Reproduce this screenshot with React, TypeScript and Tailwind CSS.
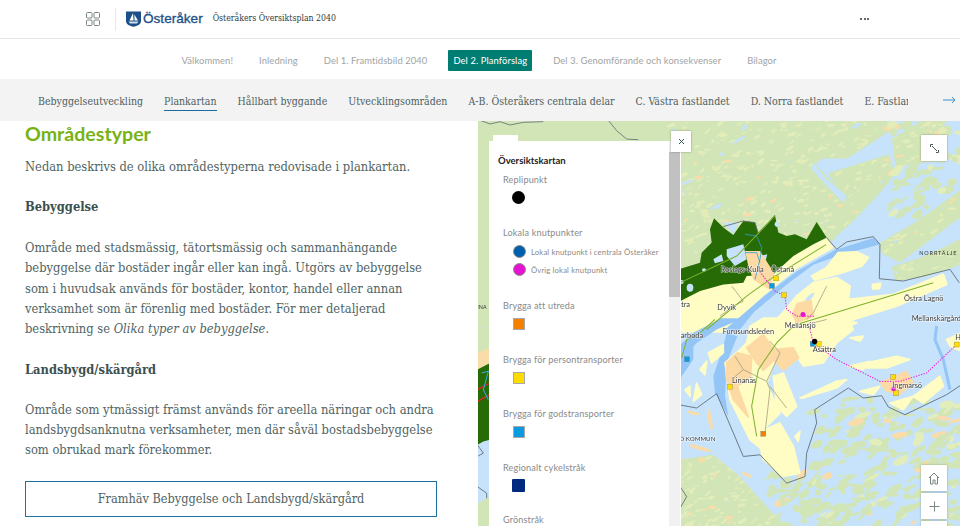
const serif = "font-['DejaVu_Serif_Condensed','DejaVu_Serif',serif] font-stretch-condensed";
const sans = "font-['Lato','Noto_Sans',sans-serif]";

const topNav = ["Välkommen!", "Inledning", "Del 1. Framtidsbild 2040", "Del 2. Planförslag", "Del 3. Genomförande och konsekvenser", "Bilagor"];
const subNav = ["Bebyggelseutveckling", "Plankartan", "Hållbart byggande", "Utvecklingsområden", "A-B. Österåkers centrala delar", "C. Västra fastlandet", "D. Norra fastlandet", "E. Fastlandet söder"];

function rng(seed: number) {
  let a = seed;
  return () => {
    a = (a + 0x6d2b79f5) | 0;
    let t = Math.imul(a ^ (a >>> 15), 1 | a);
    t = (t + Math.imul(t ^ (t >>> 7), 61 | t)) ^ t;
    return ((t ^ (t >>> 14)) >>> 0) / 4294967296;
  };
}

function speckles(seed: number, n: number, x0: number, x1: number, y0: number, y1: number) {
  const r = rng(seed);
  return Array.from({ length: n }, (_, i) => {
    const x = x0 + r() * (x1 - x0);
    const y = y0 + r() * (y1 - y0);
    const k = r();
    const rx = 3 + r() * 11;
    const ry = 1.5 + r() * 4;
    const rot = -45 + r() * 50;
    const fill = k < 0.86 ? "#e3edba" : k < 0.94 ? "#f9dcaa" : "#c4e2fa";
    return <ellipse key={i} cx={x} cy={y} rx={k > 0.94 ? rx * 0.5 : rx} ry={k > 0.94 ? ry * 0.7 : ry} fill={fill} transform={`rotate(${rot} ${x} ${y})`} />;
  });
}

function islands(seed: number, n: number, x0: number, x1: number, y0: number, y1: number) {
  const r = rng(seed);
  return Array.from({ length: n }, (_, i) => {
    const x = x0 + r() * (x1 - x0);
    const y = y0 + r() * (y1 - y0);
    const big = r();
    const rx = 7 + big * 20;
    const ry = 3 + r() * 9;
    const rot = -50 + r() * 60;
    const k = r();
    return <ellipse key={i} cx={x} cy={y} rx={rx} ry={ry} fill={k < 0.8 ? "#d2e5b6" : k < 0.87 ? "#f9dcaa" : "#e3edba"} transform={`rotate(${rot} ${x} ${y})`} />;
  });
}

function Label({ x, y, t, size = 7.4 }: { x: number; y: number; t: string; size?: number }) {
  return (
    <text x={x} y={y} fontSize={size * 3} fontFamily="Lato, sans-serif" fill="#3a3a3a" stroke="#fff" strokeWidth="3" paintOrder="stroke" strokeOpacity="0.75">{t}</text>
  );
}

function Sq({ x, y, c, s = 15 }: { x: number; y: number; c: string; s?: number }) {
  return <rect x={x - s / 2} y={y - s / 2} width={s} height={s} fill={c} stroke="#777" strokeWidth="1" />;
}

const landA = [
  "M-606 -6H610L630 30L570 70L500 114L425 114L400 135L444 180L495 231L498 285L459 360L-606 840Z",
  "M450 165L560 130L625 110L640 165L600 215L520 300L470 345L505 240Z",
  "M640 60L700 25L770 -5L810 40L740 125L650 140Z",
  "M600 375L720 305L845 215V285L740 365L660 425L610 400Z",
  "M640 445L720 420L800 385L845 360V430L730 470L650 480Z",
];
const landB = [
  "M-4 420L100 405L180 470L260 560L320 625H-4Z",
];

function MapArt() {
  return (
    <svg className="block h-full w-full blur-[0.4px]" viewBox="478 122 482 404" preserveAspectRatio="none">
      <rect x="478" y="122" width="482" height="404" fill="#c6e3fb" />
      <g transform="translate(680 120) scale(0.3333)">
        <clipPath id="landA"><path d={landA.join("")} /></clipPath>
        <g fill="#d2e5b6" stroke="#d2e5b6" strokeWidth="8" strokeLinejoin="round">{landA.map((d) => <path key={d} d={d} />)}</g>
        <g>{islands(11, 85, 620, 850, 0, 300)}</g>
        <g clipPath="url(#landA)">{speckles(7, 640, -30, 845, 0, 520)}</g>
        <g fill="#c6e3fb">
          <ellipse cx="192" cy="26" rx="12" ry="5" transform="rotate(-50 192 26)" /><ellipse cx="178" cy="62" rx="24" ry="4" transform="rotate(-30 178 62)" /><ellipse cx="125" cy="105" rx="8" ry="5" />
          <path d="M400 130L440 180L500 230L490 250L440 200L395 150Z" />
          <ellipse cx="110" cy="262" rx="20" ry="5" transform="rotate(-25 110 262)" />
          <ellipse cx="20" cy="190" rx="22" ry="4" transform="rotate(-20 20 190)" />
          <ellipse cx="530" cy="20" rx="16" ry="5" transform="rotate(-30 530 20)" />
        </g>
        <path d="M-4 545L60 515L130 495L190 490L200 470L280 465L340 410L400 375L440 358L462 385L350 450L250 530L130 640H-4Z" fill="#fffcc4" />
        <path d="M135 630L255 528L352 455L465 392L580 356L600 375L480 408L400 436L320 495L222 578L172 640Z" fill="#93c5f6" />
        <path d="M-4 450L60 430L65 400L95 370L90 330L102 297L130 325L160 347L190 305L225 310L235 340L285 288L295 340L320 350L345 345L380 360L410 308L440 355L400 375L340 410L280 465L200 470L190 490L130 495L60 515L-4 548Z" fill="#276b07" />
        <g fill="#c6e3fb">
          <path d="M140 390L190 375L200 420L165 440L140 410Z" /><path d="M100 420L125 405L130 425L105 432Z" /><ellipse cx="72" cy="452" rx="6" ry="5" /><ellipse cx="30" cy="505" rx="10" ry="12" /><path d="M240 410L262 405L255 430Z" /><path d="M130 310L175 310L160 345Z" />
          <ellipse cx="290" cy="315" rx="6" ry="8" /><ellipse cx="5" cy="488" rx="6" ry="6" />
        </g>
        <g fill="#fffcc4" stroke="#fffcc4" strokeWidth="6" strokeLinejoin="round">
          <path d="M240 640L300 590L350 530L400 490L470 475L510 500L505 540L640 525L790 465L800 495L650 560L520 600L430 625L390 640Z" />
          <path d="M395 470L440 445L475 400L530 398L565 415L545 440L480 462L405 482Z" />
          <path d="M578 495L602 492L598 508L578 508Z" />
          <path d="M500 605L530 610L510 618Z" />
        </g>
        <ellipse cx="388" cy="535" rx="20" ry="6" transform="rotate(-45 388 535)" fill="#c6e3fb" />
      </g>
      <g transform="translate(680 320) scale(0.3333)">
        <clipPath id="landB"><path d={landB.join("")} /></clipPath>
        <g fill="#d2e5b6">{landB.map((d) => <path key={d} d={d} />)}</g>
        <g>{islands(31, 250, 400, 850, 235, 630)}</g>
        <g>{islands(47, 60, 260, 420, 460, 630)}</g>
        <g clipPath="url(#landB)">{speckles(23, 150, -10, 330, 400, 620)}</g>
        <g fill="#f9dcaa">
          <ellipse cx="60" cy="385" rx="36" ry="6" transform="rotate(15 60 385)" /><ellipse cx="40" cy="280" rx="20" ry="5" transform="rotate(15 40 280)" /><ellipse cx="90" cy="300" rx="6" ry="32" transform="rotate(-10 90 300)" /><ellipse cx="65" cy="420" rx="10" ry="8" /><ellipse cx="200" cy="465" rx="16" ry="5" transform="rotate(25 200 465)" />
        </g>
        <path d="M-4 130L50 70L110 30L190 -4H125L40 40L-4 80Z" fill="#93c5f6" />
        <path d="M-4 90L40 70L40 120L5 170L-4 230Z" fill="#93c5f6" />
        <path d="M140 40L172 50L140 130L135 230L145 290L105 220L100 170L130 80Z" fill="#93c5f6" />
        <path d="M770 20L765 60L790 120L810 210" fill="none" stroke="#93c5f6" strokeWidth="9" />
        <g fill="#fffcc4" stroke="#fffcc4" strokeWidth="5" strokeLinejoin="round">
          <path d="M200 70L210 20L250 -4H500L520 30L470 70L430 130L370 140L345 100L290 110L260 190L300 280L260 320L230 340L260 400L210 360L150 240L135 130L180 90Z" />
          <path d="M280 170L310 160L350 260L320 290L290 260Z" />
          <path d="M230 340L300 310L340 380L360 460L310 470L250 420Z" />
          <path d="M85 100L130 75L130 100L95 130Z" /><path d="M50 190L65 225L40 245Z" /><path d="M15 210L30 200L30 230Z" />
          <path d="M360 235L470 185L500 180L470 205L370 235Z" /><path d="M560 130L650 110L690 120L620 145L560 145Z" />
          <path d="M510 55L550 50L540 65Z" /><path d="M800 60L845 40V95L810 80Z" /><path d="M505 140L570 125L550 150Z" />
          <path d="M700 230L780 170L790 200L730 250Z" /><path d="M630 250L700 230L670 270Z" /><path d="M540 215L600 200L580 225Z" />
          <path d="M345 350L360 335L355 365Z" /><path d="M290 350L300 340L305 370Z" /><path d="M60 150L80 125L75 165Z" />
        </g>
        <path d="M140 130L172 100L215 110L212 170L172 200L205 292L160 240L138 170Z" fill="#fdd9a3" stroke="#fdd9a3" strokeWidth="5" strokeLinejoin="round" />
        <path d="M200 85L250 45L282 90L340 85L356 115L310 152L282 122L250 152L230 130Z" fill="#fdd9a3" stroke="#fdd9a3" strokeWidth="5" strokeLinejoin="round" />
        <path d="M598 188L680 153L702 188L660 226L618 216Z" fill="#fdd9a3" />
        <g fill="none" stroke="#9a9878" strokeWidth="2.2">
          <path d="M165 110L190 150L160 175" /><path d="M190 150L260 185L270 210L255 340" /><path d="M260 185L300 100L270 65" /><path d="M270 200L320 265" /><path d="M380 15L440 0" />
        </g>
        <g fill="none" stroke="#5f6b74" strokeWidth="2.6">
          <path d="M-4 255L50 265L110 222L190 410L240 405L320 490L375 470L380 400L410 310L404 270L505 205L550 235L605 228L625 262L675 285L800 225L845 195" />
          <path d="M0 500L20 530L0 565" />
        </g>
        <path d="M230 350L215 260L235 150L290 70L340 20" fill="none" stroke="#7cb22d" strokeWidth="3" />
        <path d="M5 115L20 60L60 40L105 0" fill="none" stroke="#7cb22d" strokeWidth="3" />
        <path d="M390 30L400 70L470 120L600 185L660 185L740 160L830 75" fill="none" stroke="#ee1fd8" strokeWidth="3.5" strokeDasharray="1 7" strokeLinecap="round" />
        <Sq x={21} y={119} c="#0a9be0" />
        <Sq x={150} y={201} c="#ffdc00" />
        <Sq x={250} y={342} c="#f57f00" />
        <Sq x={398} y={73} c="#0a9be0" />
        <Sq x={416} y={73} c="#ffdc00" />
        <circle cx="404" cy="66" r="8" fill="#000" />
        <Sq x={640} y={172} c="#ffdc00" />
        <circle cx="641" cy="208" r="7" fill="#e614d2" />
        <Sq x={648} y={221} c="#ffdc00" />
        <Sq x={830} y={75} c="#ffdc00" />
        <Label x={128} y={42} t="Furusundsleden" />
        <Label x={2} y={54} t="arboda" />
        <Label x={156} y={190} t="Linanäs" />
        <Label x={398} y={97} t="Asättra" />
        <Label x={637} y={205} t="Ingmarsö" />
        <Label x={-2} y={365} t="Ö KOMMUN" size={6.2} />
        <Label x={314} y={25} t="Mellansjö" />
        <Label x={826} y={62} t="Hu" />
      </g>
      <g transform="translate(680 120) scale(0.3333)">
        <g fill="none" stroke="#5f6b74" strokeWidth="2.6">
          <path d="M130 322L190 305L225 310L235 345L285 288" />
          <path d="M440 355L470 390L500 368L580 352L600 375L598 478L670 485L810 450L838 490" />
        </g>
        <path d="M195 395L240 395L282 460L270 512L220 482L205 440Z" fill="#fdd9a3" />
        <path d="M335 585L350 550L395 540L402 592L350 612Z" fill="#fdd9a3" />
        <g fill="none" stroke="#9a9878" strokeWidth="2.2">
          <path d="M155 500L190 545L160 560L120 590" /><path d="M440 500L400 580L380 600" />
        </g>
        <path d="M195 345L230 350L245 385L240 420L225 480M195 400L230 400L240 430" fill="none" stroke="#2c9cd6" strokeWidth="2.4" />
        <g fill="none" stroke="#7cb22d" strokeWidth="3">
          <path d="M-4 492L170 410L285 290" /><path d="M80 630L200 530L270 480L438 376" /><path d="M360 612L760 490" />
        </g>
        <path d="M240 458L285 515L315 530L320 570L350 590L400 590" fill="none" stroke="#ee1fd8" strokeWidth="3.5" strokeDasharray="1 7" strokeLinecap="round" />
        <Sq x={289} y={477} c="#ffdc00" />
        <Sq x={276} y={499} c="#0a9be0" />
        <Sq x={313} y={527} c="#ffdc00" />
        <circle cx="369" cy="585" r="7.5" fill="#e614d2" />
        <Label x={122} y={457} t="Roslags-Kulla" />
        <Label x={273} y={459} t="Östanå" />
        <Label x={112} y={572} t="Dyvik" />
        <Label x={-4} y={564} t="ttra" />
        <Label x={672} y={546} t="Östra Lagnö" />
        <Label x={695} y={605} t="Mellanskärgården" />
        <text x={718} y={408} fontSize="16.5" letterSpacing="2.6" fontFamily="Lato, sans-serif" fill="#333">NORRTÄLJE</text>
      </g>
      <g transform="translate(480 330) scale(0.3333)">
        <path d="M-8 -6H30V345L10 330L-8 350Z" fill="#c6e3fb" />
        <path d="M-8 -6H30V90L-8 100Z" fill="#d2e5b6" />
        <path d="M-8 70L30 55V110L-8 120Z" fill="#f9dcaa" />
        <path d="M-8 120L30 100V330L10 335L-8 345Z" fill="#276b07" />
        <path d="M-8 180L30 160M-8 215L30 195" stroke="#e5232b" strokeWidth="4" />
        <path d="M5 130L25 125L10 180L25 210" fill="none" stroke="#3aa8e0" strokeWidth="3" />
        <path d="M-8 345L10 370L-8 380M-8 470L20 490L20 540" fill="none" stroke="#5f6b74" strokeWidth="2.6" />
        <path d="M-8 520L30 500V588H-8Z" fill="#d2e5b6" />
      </g>
      <g transform="translate(480 120) scale(0.3333)">
        <text x="-8" y="570" fontSize="16" fontFamily="Lato, sans-serif" fill="#333">INA</text>
        <path d="M0 4L30 15L60 8L90 18L130 10L190 8M385 4L410 35L440 60L475 62" stroke="#5f6b74" fill="none" strokeWidth="2.4" />
      </g>
    </svg>
  );
}

function LegendTitle({ children }: { children: string }) {
  return <div className="text-[9.1px] leading-[12px] tracking-[0.15px] text-[#8a8a8a]">{children}</div>;
}

function LegendBlock({ title, color }: { title: string; color: string }) {
  return (
    <div className="mb-[24px]">
      <LegendTitle>{title}</LegendTitle>
      <div className="ml-[10px] mt-[6px] h-[12px] w-[12px] border border-[#a8a8a8]" style={{ backgroundColor: color }} />
    </div>
  );
}

export default function App() {
  return (
    <div className="flex h-[526px] w-[960px] flex-col overflow-hidden bg-white">
      <header className="flex h-[39px] shrink-0 items-center border-b border-[#e0e6e6] pl-[86px] pr-[91px]">
        <svg width="14" height="14" viewBox="0 0 14 14" fill="none" stroke="#7b8585" strokeWidth="1">
          <rect x="0.5" y="0.5" width="5.5" height="5.5" rx="1" />
          <rect x="8" y="0.5" width="5.5" height="5.5" rx="1" />
          <rect x="0.5" y="8" width="5.5" height="5.5" rx="1" />
          <rect x="8" y="8" width="5.5" height="5.5" rx="1" />
        </svg>
        <div className="ml-[15px] h-[23px] w-px bg-[#e4e8e8]" />
        <svg className="ml-[10px]" width="15" height="16" viewBox="0 0 15 16">
          <path d="M0 0.5H15V10C15 13.5 11 15 7.5 15.8C4 15 0 13.5 0 10Z" fill="#1b4f87" />
          <path d="M7 2L7.6 9.5H3.5Z" fill="#fff" />
          <path d="M8.3 3.5L12 9.5H8.6Z" fill="#fff" />
          <path d="M2.5 10.5H12.5L11 12.5H4Z" fill="#cfe0ee" />
        </svg>
        <span className="ml-[2px] font-['Liberation_Sans',sans-serif] text-[13.6px] leading-none text-[#1b4f87] [-webkit-text-stroke:0.3px_#1b4f87]">Österåker</span>
        <span className={`ml-[10px] text-[8.7px] text-[#333b3b] ${serif}`}>Österåkers Översiktsplan 2040</span>
        <span className="ml-auto flex gap-[1.5px]">
          <i className="block h-[2px] w-[2px] rounded-full bg-[#333]" />
          <i className="block h-[2px] w-[2px] rounded-full bg-[#333]" />
          <i className="block h-[2px] w-[2px] rounded-full bg-[#333]" />
        </span>
      </header>

      <nav className={`flex h-[40px] shrink-0 items-center justify-center gap-[16px] pr-[2px] pt-[2px] text-[9.4px] tracking-[0.1px] ${sans}`}>
        {topNav.map((t) => (
          <span key={t} className={t.startsWith("Del 2") ? "rounded-[1px] bg-[#007d72] px-[5px] py-[4px] leading-[13px] text-white" : "px-[5px] py-[4px] leading-[13px] text-[#a0a4a4]"}>{t}</span>
        ))}
      </nav>

      <nav className={`relative flex h-[42px] shrink-0 items-center bg-[#f3f3f3] pl-[38px] pt-[3px] text-[10.5px] text-[#4e5e5e] ${serif}`}>
        <div className="flex w-[870px] gap-[21px] overflow-hidden whitespace-nowrap">
          {subNav.map((t) => (
            <span key={t} className={t === "Plankartan" ? "shrink-0 border-b-[1px] border-[#1a6a9f] leading-[17px]" : "shrink-0 border-b-[1px] border-transparent leading-[17px]"}>{t}</span>
          ))}
        </div>
        <svg className="absolute left-[943px] top-[17px]" width="13" height="8" viewBox="0 0 13 8" fill="none" stroke="#3d8fd0" strokeWidth="1">
          <path d="M0 4H12M9 1L12 4L9 7" />
        </svg>
      </nav>

      <main className="flex min-h-0 flex-1">
        <section className={`w-[478px] shrink-0 overflow-hidden pl-[25px] pr-[41px] text-[12.8px] leading-[20.3px] text-[#4f6363] ${serif}`}>
          <h2 className={`mt-[1px] text-[19.6px] font-bold leading-[24px] text-[#78b213] ${sans}`}>Områdestyper</h2>
          <p className="mt-[11px]">Nedan beskrivs de olika områdestyperna redovisade i plankartan.</p>
          <p className="mt-[20px] font-bold text-[#3d5050]">Bebyggelse</p>
          <p className="mt-[20.5px]">Område med stadsmässig, tätortsmässig och sammanhängande bebyggelse där bostäder ingår eller kan ingå. Utgörs av bebyggelse som i huvudsak används för bostäder, kontor, handel eller annan verksamhet som är förenlig med bostäder. För mer detaljerad beskrivning se <em>Olika typer av bebyggelse.</em></p>
          <p className="mt-[20px] font-bold text-[#3d5050]">Landsbygd/skärgård</p>
          <p className="mt-[20px]">Område som ytmässigt främst används för areella näringar och andra landsbygdsanknutna verksamheter, men där såväl bostadsbebyggelse som obrukad mark förekommer.</p>
          <div className="mt-[20px] flex h-[36px] w-[412px] items-center justify-center border border-[#1f6f9f] text-[12.6px]">Framhäv Bebyggelse och Landsbygd/skärgård</div>
        </section>

        <section className="relative min-w-0 flex-1 overflow-hidden">
          <MapArt />
          <div className="absolute left-[15px] top-[14px] h-[10px] w-[25px] bg-white" />
          <aside className={`absolute left-[11px] top-[20px] h-[400px] w-[192px] overflow-hidden bg-white pl-[9px] pt-[14px] ${sans}`}>
            <div className="text-[9.5px] font-bold leading-[12px] text-[#222]">Översiktskartan</div>
            <div className="ml-[5px] mt-[7px]">
              <div className="mb-[23px]">
                <LegendTitle>Replipunkt</LegendTitle>
                <div className="ml-[9px] mt-[5px] h-[13px] w-[13px] rounded-full bg-black" />
              </div>
              <div className="mb-[24px]">
                <LegendTitle>Lokala knutpunkter</LegendTitle>
                <div className="ml-[10px] mt-[6px] flex items-center gap-[5px] text-[7.7px] leading-[12px] tracking-[0.15px] text-[#8a8a8a]">
                  <i className="block h-[13px] w-[13px] rounded-full border border-[#8a8a8a] bg-[#0060b0]" />Lokal knutpunkt i centrala Österåker
                </div>
                <div className="ml-[10px] mt-[5px] flex items-center gap-[5px] text-[7.7px] leading-[12px] tracking-[0.15px] text-[#8a8a8a]">
                  <i className="block h-[13px] w-[13px] rounded-full border border-[#8a8a8a] bg-[#e614d2]" />Övrig lokal knutpunkt
                </div>
              </div>
              <LegendBlock title="Brygga att utreda" color="#f57f00" />
              <LegendBlock title="Brygga för persontransporter" color="#ffdc00" />
              <LegendBlock title="Brygga för godstransporter" color="#0a9be0" />
              <div className="mb-[22px]">
                <LegendTitle>Regionalt cykelstråk</LegendTitle>
                <div className="ml-[9px] mt-[5px] h-[13px] w-[13px] rounded-[1px] bg-[#002a7f]" />
              </div>
              <LegendTitle>Grönstråk</LegendTitle>
            </div>
            <div className="absolute right-[1px] top-0 h-full w-[11px] bg-[#f1f1f1]">
              <div className="mt-[11px] h-[145px] w-full bg-[#c1c1c1]" />
            </div>
          </aside>
          <button className="absolute left-[193px] top-[10px] flex h-[21px] w-[20px] items-center justify-center bg-white shadow-[0_0_2px_rgba(0,0,0,0.35)]">
            <svg width="7" height="7" viewBox="0 0 7 7" stroke="#33565e" strokeWidth="1"><path d="M1 1L6 6M6 1L1 6" /></svg>
          </button>
          <button className="absolute left-[443px] top-[14px] flex h-[26px] w-[26px] items-center justify-center bg-white shadow-[0_0_2px_rgba(0,0,0,0.35)]">
            <svg width="9" height="9" viewBox="0 0 9 9" fill="none" stroke="#4a5a5a" strokeWidth="1"><path d="M2 2L7 7M0.5 3V0.5H3M8.5 6V8.5H6" /></svg>
          </button>
          <div className="absolute left-[443px] top-[344px] flex w-[26px] flex-col gap-[2px]">
            <button className="flex h-[26px] items-center justify-center bg-white shadow-[0_0_2px_rgba(0,0,0,0.3)]">
              <svg width="12" height="13" viewBox="0 0 12 13" fill="none" stroke="#7a8585" strokeWidth="1"><path d="M1 6L6 1L11 6M2.5 5V12H5V8H7V12H9.5V5" /></svg>
            </button>
            <button className="flex h-[26px] items-center justify-center bg-white shadow-[0_0_2px_rgba(0,0,0,0.3)]">
              <svg width="11" height="11" viewBox="0 0 11 11" fill="none" stroke="#7a8585" strokeWidth="1"><path d="M5.5 0.5V10.5M0.5 5.5H10.5" /></svg>
            </button>
            <button className="h-[26px] bg-white shadow-[0_0_2px_rgba(0,0,0,0.3)]" />
          </div>
        </section>
      </main>
    </div>
  );
}
